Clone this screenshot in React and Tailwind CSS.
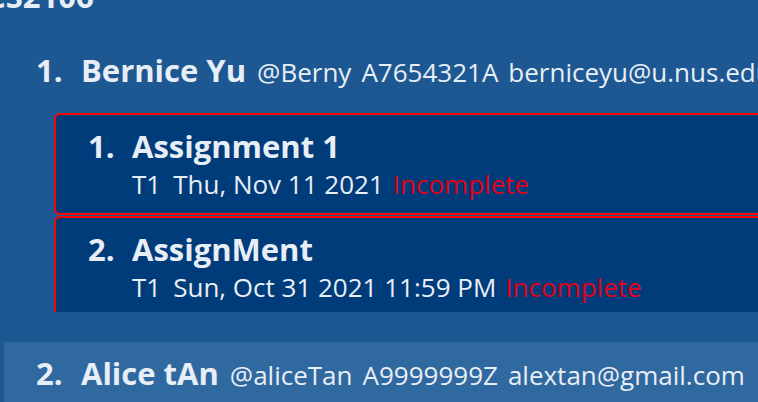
const font = { fontFamily: '"Open Sans", "Noto Sans", sans-serif' };

const assignments = [
  { id: 1, title: 'Assignment 1', tag: 'T1', due: 'Thu, Nov 11 2021', status: 'Incomplete' },
  { id: 2, title: 'AssignMent', tag: 'T1', due: 'Sun, Oct 31 2021 11:59 PM', status: 'Incomplete' },
];

const AssignmentCard = ({ index, item }) => (
  <div className="w-[740px] h-[102px] shrink-0 rounded-[6px] border-2 border-[#ff0000] bg-[#003b7a] pl-[32px] pt-[8px] whitespace-nowrap">
    <div className="flex items-baseline text-[31px] leading-[46px] font-bold">
      <span className="w-[44px] shrink-0">{index}.</span>
      <span>{item.title}</span>
    </div>
    <div className="ml-[44px] -mt-[4px] flex items-baseline text-[26px] leading-[39px]">
      <span className="mr-[12px]">{item.tag}</span>
      <span className="mr-[9px]">{item.due}</span>
      <span className="text-[#e3001b]">{item.status}</span>
    </div>
  </div>
);

const PersonRow = ({ index, name, handle, matric, email }) => (
  <div className="flex items-baseline whitespace-nowrap">
    <span className="w-[45px] shrink-0 text-[31px] leading-[46px] font-bold">{index}.</span>
    <span className="shrink-0 mr-[11px] text-[31px] leading-[46px] font-bold">{name}</span>
    <span className="shrink-0 mr-[10px] text-[26px] leading-[39px]">{handle}</span>
    <span className="shrink-0 mr-[10px] text-[26px] leading-[39px]">{matric}</span>
    <span className="shrink-0 text-[26px] leading-[39px]">{email}</span>
  </div>
);

export default function App() {
  return (
    <div style={font} className="w-[758px] h-[402px] overflow-hidden bg-[#1d5893] text-[#e8eef6]">
      <div className="-mt-[27px] -ml-[14px] h-[46px] text-[31px] leading-[46px] font-bold">CS2106</div>

      <div className="pl-[36px] mt-[28px]">
        <PersonRow index={1} name="Bernice Yu" handle="@Berny" matric="A7654321A" email="berniceyu@u.nus.edu" />
      </div>

      <div className="ml-[54px] mt-[20px] h-[199px] overflow-hidden flex flex-col gap-[1px]">
        {assignments.map((a, i) => (
          <AssignmentCard key={a.id} index={i + 1} item={a} />
        ))}
      </div>

      <div className="ml-[4px] mt-[30px] h-[80px] bg-[#3068a0] pl-[32px] pt-[8px]">
        <PersonRow index={2} name="Alice tAn" handle="@aliceTan" matric="A9999999Z" email="alextan@gmail.com" />
      </div>
    </div>
  );
}
